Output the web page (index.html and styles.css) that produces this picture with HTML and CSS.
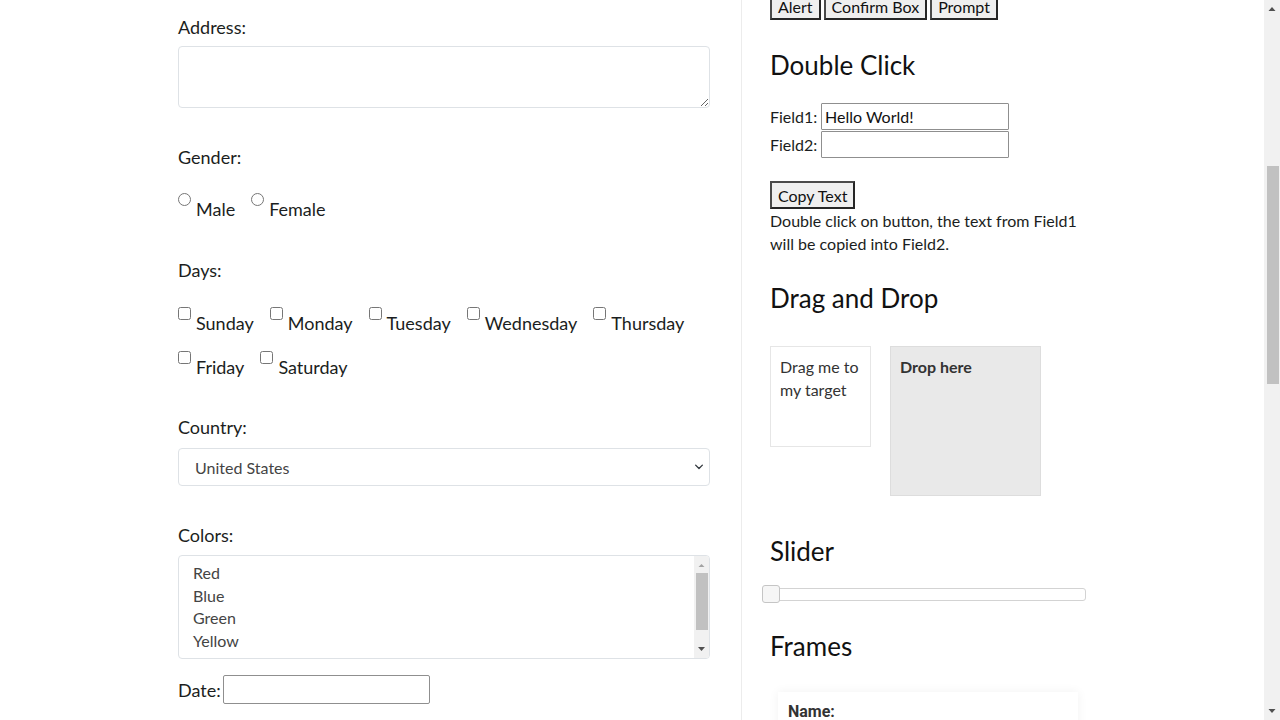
FILE: index.html
```html
<!DOCTYPE html>
<html lang="en">
<head>
<meta charset="utf-8">
<title>Automation Testing Practice</title>
<link rel="stylesheet" href="styles.css">
</head>
<body>
<div class="screen">
  <div class="viewport">
    <main class="page">
      <section class="col-left">
        <div class="group g-address">
          <label class="lbl" for="textarea">Address:</label>
          <textarea id="textarea" class="form-control area"></textarea>
        </div>

        <div class="group g-gender">
          <div class="lbl">Gender:</div>
          <div class="opts">
            <label class="opt"><input type="radio" name="gender" class="tick"><span>Male</span></label>
            <label class="opt"><input type="radio" name="gender" class="tick"><span>Female</span></label>
          </div>
        </div>

        <div class="group g-days">
          <div class="lbl">Days:</div>
          <div class="opts">
            <label class="opt"><input type="checkbox" class="tick"><span>Sunday</span></label>
            <label class="opt"><input type="checkbox" class="tick"><span>Monday</span></label>
            <label class="opt"><input type="checkbox" class="tick"><span>Tuesday</span></label>
            <label class="opt"><input type="checkbox" class="tick"><span>Wednesday</span></label>
            <label class="opt"><input type="checkbox" class="tick"><span>Thursday</span></label>
            <label class="opt"><input type="checkbox" class="tick"><span>Friday</span></label>
            <label class="opt"><input type="checkbox" class="tick"><span>Saturday</span></label>
          </div>
        </div>

        <div class="group g-country">
          <div class="lbl">Country:</div>
          <div class="select">
            <span class="select-value">United States</span>
            <svg class="chev" width="16" height="12" viewBox="0 0 16 16" aria-hidden="true"><path d="M3.5 5.5 8 10l4.5-4.5" fill="none" stroke="#343a40" stroke-width="1.8" stroke-linecap="round" stroke-linejoin="round"/></svg>
          </div>
        </div>

        <div class="group g-colors">
          <div class="lbl">Colors:</div>
          <div class="listbox" role="listbox">
            <ul class="listbox-items">
              <li>Red</li>
              <li>Blue</li>
              <li>Green</li>
              <li>Yellow</li>
              <li>Red</li>
              <li>White</li>
              <li>Green</li>
            </ul>
            <div class="mini-scroll">
              <svg class="arr" width="15" height="17" viewBox="0 0 15 17" aria-hidden="true"><polygon points="4.5,11 7.5,8 10.5,11" fill="#a3a3a3"/></svg>
              <div class="mini-thumb"></div>
              <svg class="arr arr-down" width="15" height="17" viewBox="0 0 15 17" aria-hidden="true"><polygon points="4,6 11,6 7.5,10" fill="#505050"/></svg>
            </div>
          </div>
        </div>

        <div class="group g-date">
          <label class="lbl date-lbl" for="datepicker">Date:</label>
          <input id="datepicker" type="text" class="date-input">
        </div>
      </section>

      <section class="col-right">
        <div class="btn-row">
          <button class="btn">Alert</button>
          <button class="btn">Confirm Box</button>
          <button class="btn">Prompt</button>
        </div>

        <h2 class="title t-dbl">Double Click</h2>
        <div class="fields">
          <label for="field1">Field1:</label>
          <input id="field1" type="text" class="txt" value="Hello World!">
          <label for="field2">Field2:</label>
          <input id="field2" type="text" class="txt">
        </div>
        <button class="btn copy-btn">Copy Text</button>
        <p class="desc">Double click on button, the text from Field1 will be copied into Field2.</p>

        <h2 class="title t-dnd">Drag and Drop</h2>
        <div class="dnd">
          <div class="draggable"><p>Drag me to my target</p></div>
          <div class="droppable"><p>Drop here</p></div>
        </div>

        <h2 class="title t-slider">Slider</h2>
        <div class="slider">
          <span class="slider-handle"></span>
        </div>

        <h2 class="title t-frames">Frames</h2>
        <div class="frame-wrap">
          <div class="frame-card">
            <div class="frame-lbl">Name:</div>
          </div>
        </div>
      </section>
    </main>
  </div>

  <div class="vscroll" aria-hidden="true">
    <svg width="16" height="17" viewBox="0 0 16 17"><polygon points="4.5,11 8,7 11.5,11" fill="#505050"/></svg>
    <div class="vthumb"></div>
    <svg class="vdown" width="16" height="17" viewBox="0 0 16 17"><polygon points="4.5,6 11.5,6 8,10" fill="#505050"/></svg>
  </div>
</div>
</body>
</html>
```

FILE: styles.css
```css
* { box-sizing: border-box; }

html, body {
  margin: 0;
  height: 100%;
  overflow: hidden;
}

body {
  font-family: Lato, "Open Sans", sans-serif;
  color: #1b1e21;
  background: #fff;
}

.screen {
  display: flex;
  width: 1280px;
  height: 720px;
}

.viewport {
  flex: 1;
  overflow: hidden;
}

.page {
  display: flex;
  min-height: 720px;
  padding-left: 178px;
}

/* ---------- left column ---------- */
.col-left {
  width: 532px;
  padding-top: 15px;
}

.lbl {
  display: block;
  font-size: 18px;
  line-height: 24px;
}

.group { margin: 0; }
.g-gender { margin-top: 37px; }
.g-days { margin-top: 37px; }
.g-country { margin-top: 36px; }
.g-colors { margin-top: 37px; }
.g-date { margin-top: 16px; }

.area {
  display: block;
  width: 100%;
  height: 62px;
  margin-top: 7px;
  border: 1px solid #dee2e6;
  border-radius: 4px;
  font: inherit;
  padding: 6px 12px;
}

.opts {
  display: flex;
  flex-wrap: wrap;
  column-gap: 16px;
  row-gap: 16px;
  margin-top: 24px;
}
.g-days .opts { margin-top: 25px; }

.opt {
  display: flex;
  align-items: flex-start;
  height: 28px;
  font-size: 18px;
  line-height: 24px;
}

.tick {
  width: 13px;
  height: 13px;
  margin: 0 5px 0 0;
}

.opt span { margin-top: 4px; }

.select {
  display: flex;
  align-items: center;
  justify-content: space-between;
  height: 38px;
  margin-top: 9px;
  padding: 0 2px 0 16px;
  border: 1px solid #dee2e6;
  border-radius: 4px;
  font-size: 16px;
  color: #444;
}

.listbox {
  display: flex;
  height: 104px;
  margin-top: 8px;
  border: 1px solid #dee2e6;
  border-radius: 4px;
  overflow: hidden;
}

.listbox-items {
  flex: 1;
  margin: 0;
  padding: 6px 0 0 14px;
  list-style: none;
  font-size: 16px;
  line-height: 22.7px;
  color: #444;
  overflow: hidden;
}

.mini-scroll {
  width: 15px;
  display: flex;
  flex-direction: column;
  align-items: center;
  background: #f1f1f1;
}

.mini-thumb {
  width: 12px;
  height: 57px;
  background: #c1c1c1;
}

.arr { flex: none; }
.arr-down { margin-top: auto; }

.g-date {
  display: flex;
  align-items: center;
  gap: 2px;
}

.date-lbl { display: inline; }

.date-input {
  width: 207px;
  height: 29px;
  border: 1px solid #8f8f8f;
  border-radius: 2px;
  font: inherit;
  font-size: 16px;
  padding: 1px 3px;
}

/* ---------- right column ---------- */
.col-right {
  width: 345px;
  margin-left: 31px;
  padding-left: 28px;
  border-left: 1px solid #ececec;
}

.btn {
  height: 28px;
  padding: 1px 6px 0;
  font-family: inherit;
  font-size: 16px;
  line-height: 22px;
  color: #111;
  background: #efefef;
  border: 2px solid #4a4a4a;
  border-right-color: #262626;
  border-bottom-color: #262626;
  border-radius: 0;
}

.btn-row {
  display: flex;
  gap: 3px;
  margin-top: -8px;
}

.title {
  margin: 0;
  font-size: 26px;
  font-weight: 400;
  line-height: 32px;
  color: #111;
}

.t-dbl { margin-top: 29px; }
.t-dnd { margin-top: 27px; }
.t-slider { margin-top: 39px; }
.t-frames { margin-top: 29px; }

.fields {
  display: grid;
  grid-template-columns: 51px 188px;
  row-gap: 1px;
  align-items: center;
  margin-top: 22px;
  font-size: 16px;
}

.txt {
  height: 27px;
  width: 188px;
  border: 1px solid #8f8f8f;
  border-radius: 1px;
  padding: 1px 3px;
  font-family: inherit;
  font-size: 16px;
  color: #111;
}

.copy-btn { margin-top: 23px; display: block; }

.desc {
  margin: 0;
  font-size: 16px;
  line-height: 23px;
}

.dnd {
  display: flex;
  align-items: flex-start;
  gap: 19px;
  margin-top: 32px;
}

.dnd p { margin: 0; }

.draggable {
  width: 101px;
  height: 101px;
  padding: 8px 9px;
  border: 1px solid #e6e6e6;
  font-size: 16px;
  line-height: 23px;
  color: #333;
}

.droppable {
  width: 151px;
  height: 150px;
  padding: 8px 9px;
  background: #e9e9e9;
  border: 1px solid #dddddd;
  font-size: 16px;
  line-height: 23px;
  font-weight: 700;
  color: #333;
}

.slider {
  position: relative;
  width: 316px;
  height: 13px;
  margin-top: 21px;
  border: 1px solid #d3d3d3;
  border-radius: 3px;
  background: #fff;
}

.slider-handle {
  position: absolute;
  left: -9px;
  top: -4px;
  width: 18px;
  height: 18px;
  border: 1px solid #c5c5c5;
  border-radius: 3px;
  background: #f6f6f6;
}

.frame-wrap {
  margin-top: 30px;
  padding: 0 8px;
}

.frame-card {
  height: 60px;
  padding: 10px 10px;
  background: #fff;
  box-shadow: 0 0 10px rgba(0, 0, 0, 0.06);
  font-family: Roboto, "Noto Sans", sans-serif;
}

.frame-lbl {
  font-size: 16px;
  font-weight: 700;
  line-height: 19px;
  color: #333;
}

/* ---------- page scrollbar ---------- */
.vscroll {
  width: 16px;
  display: flex;
  flex-direction: column;
  align-items: center;
  background: #f1f1f1;
}

.vthumb {
  width: 12px;
  height: 218px;
  margin-top: 149px;
  margin-left: 1px;
  background: #c1c1c1;
}

.vdown { margin-top: auto; }
```
